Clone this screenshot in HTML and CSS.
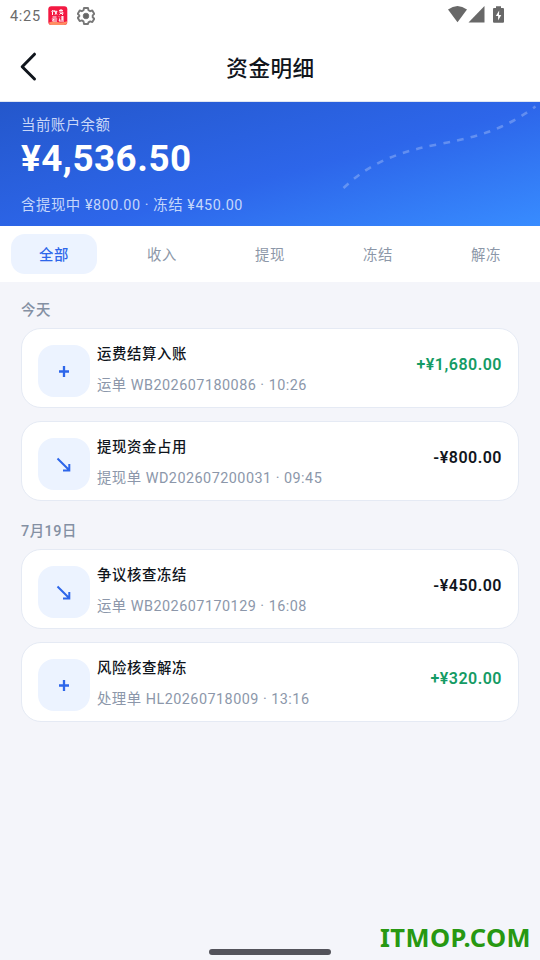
FILE: index.html
```html
<!DOCTYPE html>
<html lang="zh-CN">
<head>
<meta charset="utf-8">
<title>资金明细</title>
<link rel="stylesheet" href="styles.css">
</head>
<body>
<div class="status">
  <span class="clock">4:25</span>
  <svg class="app-icon" width="20" height="20" viewBox="0 0 20 20"><rect x=".3" y=".2" width="19" height="18.8" rx="3" fill="#f31942"/><path d="M1 16.5Q5 14.8 9 16T19 15.2V17q-.5 2-3 2H3q-2 0-2-2.5Z" fill="#ff8d62"/><path d="M5 4 3.7 6M4.5 5.5V9M6.2 4 5.7 5.8M6 5.3h3L7 8.7M7 6l2 2.5M11 4.4h4M13 3v2M11.3 6h3.5v2M11.5 8.6 13 7l2 2M4.5 11h4M3.8 13h5.4M6 13l-1.5 2H9M11 10.5l.8.8M11 13h1l-1 2h5M13 11h3M13 13h3M14.3 10v4.4" fill="none" stroke="#fff"/></svg>
  <svg class="gear" width="18" height="18" viewBox="0 0 18 18" fill="none" stroke="#777"><path d="M7 1h4l.5 2.2 1.7 1 2.1-.7 2 3.4-1.6 1.5v1.8l1.6 1.5-2 3.4-2.1-.7-1.7 1L11 17H7l-.5-2.6-1.7-1-2.1.7-2-3.4 1.6-1.5V8.4L.7 6.9l2-3.4 2.1.7 1.7-1Z" stroke-width="1.9" stroke-linejoin="round"/><circle cx="9" cy="9" r="2.8" fill="#666"/></svg>
  <svg class="signals" width="58" height="18" viewBox="0 0 58 18" fill="#686868"><path d="M0 3.5Q9.5-3.5 19 3.5L9.5 16.2Z"/><path d="M36.5 0v16.5H20.5Z"/><path d="M46 2h2V.2h5V2h2q1 0 1 1v12.7q0 1-1 1h-9q-1 0-1-1V3q0-1 1-1Z"/><path d="M51.2 4.5 47.8 10h2.3v4.5L53.3 9H51Z" fill="#fff"/></svg>
</div>
<header class="header">
  <svg class="back" width="18" height="30" viewBox="0 0 18 30"><path d="M14.5 2.2 2.2 14.7 14.5 27" fill="none" stroke="#10151c" stroke-width="3" stroke-linecap="round" stroke-linejoin="round"/></svg>
  <h1>资金明细</h1>
</header>
<section class="hero">
  <svg class="trail" width="540" height="124" viewBox="0 0 540 124"><path d="M343.5 86C373 58 403 49 441 41.7S503 28 535.5 4.5" fill="none" stroke="#fff" stroke-opacity=".25" stroke-width="2.6" stroke-dasharray="6.7 7.2"/></svg>
  <div class="hero-label">当前账户余额</div>
  <div class="balance">¥4,536.50</div>
  <div class="hero-note">含提现中 ¥800.00 · 冻结 ¥450.00</div>
</section>
<nav class="tabs">
  <span class="tab active">全部</span><span class="tab">收入</span><span class="tab">提现</span><span class="tab">冻结</span><span class="tab">解冻</span>
</nav>
<main class="list">
  <section class="group">
    <h2>今天</h2>
    <article class="card">
      <div class="badge"><svg width="16" height="16" viewBox="0 0 16 16"><path d="M8 3v11M3 8.5h10"/></svg></div>
      <div class="info"><div class="name">运费结算入账</div><div class="detail">运单 WB202607180086 · 10:26</div></div>
      <div class="amount plus">+¥1,680.00</div>
    </article>
    <article class="card">
      <div class="badge"><svg class="arrow" width="16" height="16" viewBox="0 0 16 16"><path d="M1.5 2.5 13.3 14.3M13.3 8V14.6H7"/></svg></div>
      <div class="info"><div class="name">提现资金占用</div><div class="detail">提现单 WD202607200031 · 09:45</div></div>
      <div class="amount">-¥800.00</div>
    </article>
  </section>
  <section class="group">
    <h2>7月19日</h2>
    <article class="card">
      <div class="badge"><svg class="arrow" width="16" height="16" viewBox="0 0 16 16"><path d="M1.5 2.5 13.3 14.3M13.3 8V14.6H7"/></svg></div>
      <div class="info"><div class="name">争议核查冻结</div><div class="detail">运单 WB202607170129 · 16:08</div></div>
      <div class="amount">-¥450.00</div>
    </article>
    <article class="card">
      <div class="badge"><svg width="16" height="16" viewBox="0 0 16 16"><path d="M8 3v11M3 8.5h10"/></svg></div>
      <div class="info"><div class="name">风险核查解冻</div><div class="detail">处理单 HL20260718009 · 13:16</div></div>
      <div class="amount plus">+¥320.00</div>
    </article>
  </section>
</main>
<div class="home-bar"></div>
<div class="watermark">ITMOP.COM</div>
</body>
</html>
```

FILE: styles.css
```css
* { box-sizing: border-box; }
body {
  margin: 0;
  height: 960px;
  position: relative;
  overflow: hidden;
  background: #f4f5fa;
  color: #10151c;
  font-family: Roboto, "Noto Sans CJK SC", sans-serif;
  font-size: 14.4px;
  letter-spacing: .5px;
  white-space: nowrap;
}
svg { display: block; flex: none; }
h1, h2 { margin: 0; }
.status { height: 32px; background: #fff; display: flex; align-items: center; padding: 0 34px 0 10px; }
.clock { width: 38px; font-size: 14.5px; font-weight: 450; color: #6b6b6b; letter-spacing: .7px; }
.gear { margin-left: 9px; }
.signals { margin: -2px 0 0 auto; }
.header { height: 70px; background: #fff; display: grid; grid-template-columns: 40px 1fr 40px; align-items: center; padding: 0 20px; border-bottom: 1px solid #e0e6f1; }
.header h1 { text-align: center; font-size: 21.6px; font-weight: 500; line-height: 32px; padding: 5px 0 0 1px; }
.hero { height: 124px; position: relative; padding: 13px 21px; color: #fff; background: linear-gradient(165deg, #2457cb 0%, #2d66ea 55%, #388cff 100%); }
.trail { position: absolute; left: 0; top: 0; }
.hero-label { line-height: 22px; color: #c9d7f8; }
.balance { font-size: 36.8px; font-weight: 700; line-height: 44px; }
.hero-note { line-height: 22px; margin-top: 14px; color: #c5d7fb; letter-spacing: .56px; }
.tabs { height: 56px; background: #fff; padding: 8px 0; display: grid; grid-template-columns: repeat(5, 1fr); }
.tab { margin: 0 11px; border-radius: 14px; text-align: center; line-height: 40px; padding-top: 2px; height: 40px; color: #8c97a8; }
.tab.active { color: #2d66ea; background: #ecf3ff; font-weight: 500; }
.list { padding: 18px 21px; }
.group { display: grid; gap: 13px; margin-bottom: 18px; }
.group h2 { font-size: 14.4px; line-height: 22px; font-weight: 500; color: #8490a3; margin-bottom: -7px; }
.group + .group h2 { padding-top: 2px; }
.card { height: 80px; background: #fff; border: 1px solid #e5eaf4; border-radius: 20px; padding: 0 16px; display: flex; align-items: flex-start; }
.badge { width: 52px; height: 52px; margin: 16px 7px 0 0; border-radius: 16px; background: #ecf3ff; display: grid; place-items: center; }
.badge svg { fill: none; stroke: #2d66ea; stroke-width: 2.3; }
.badge .arrow { stroke-width: 2; }
.info { flex: 1; padding-top: 15px; }
.name { font-weight: 500; line-height: 22px; letter-spacing: .6px; }
.detail { color: #8c97aa; line-height: 22px; margin-top: 9px; letter-spacing: .48px; }
.amount { margin-top: 25px; line-height: 22px; font-size: 16px; font-weight: 600; }
.amount.plus { color: #149b64; }
.home-bar { position: absolute; left: 209px; top: 949px; width: 122px; height: 6px; border-radius: 3px; background: #53535b; }
.watermark { position: absolute; right: 9px; top: 920px; font: 700 25.5px/34px "Noto Sans", sans-serif; letter-spacing: .4px; color: #279812; }
```
